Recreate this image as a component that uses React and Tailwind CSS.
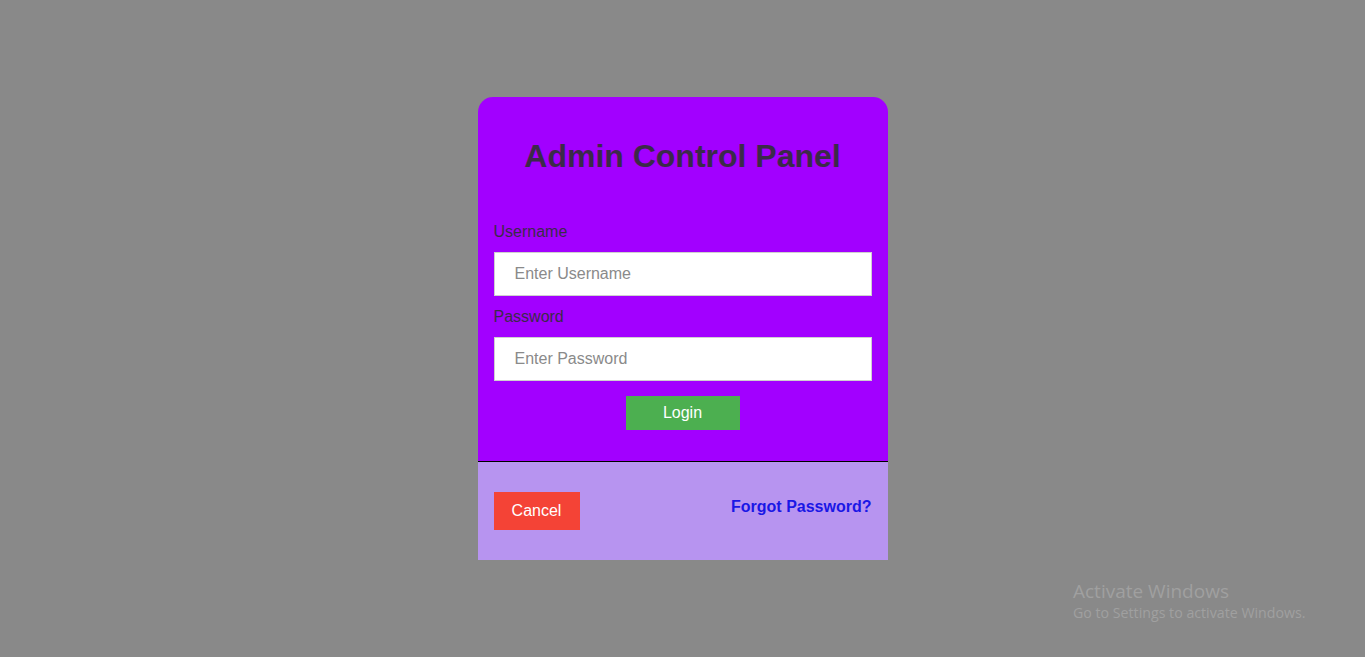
export default function App() {
  return (
    <div className="relative min-h-[657px] w-full bg-[#898989] font-['Liberation_Sans',Arial,sans-serif] overflow-hidden">
      <div className="mx-auto w-[410px] pt-[97px]">
        <div className="rounded-t-[15px] bg-[#a200ff] px-4 pt-[41px] pb-[31px]">
          <h1 className="text-center text-[32px] leading-[37px] font-bold text-[#3b2a49]">Admin Control Panel</h1>
          <form className="mt-[48px] flex flex-col">
            <label className="text-[16px] leading-[18px] text-[#3b2a49]">Username</label>
            <input
              type="text"
              placeholder="Enter Username"
              className="mt-[11px] h-[44px] w-full border border-[#cfcfcf] bg-white px-5 text-[16px] text-[#333] placeholder:text-[#8a8a8a] outline-none"
            />
            <label className="mt-[12px] text-[16px] leading-[18px] text-[#3b2a49]">Password</label>
            <input
              type="password"
              placeholder="Enter Password"
              className="mt-[11px] h-[44px] w-full border border-[#cfcfcf] bg-white px-5 text-[16px] text-[#333] placeholder:text-[#8a8a8a] outline-none"
            />
            <button type="button" className="mx-auto mt-[15px] h-[34px] w-[114px] bg-[#4caf50] text-[16px] text-white">
              Login
            </button>
          </form>
        </div>
        <div className="flex h-[99px] items-start justify-between border-t border-black bg-[#b794f0] px-4 pt-[30px]">
          <button type="button" className="h-[38px] w-[86px] bg-[#f44336] text-[16px] text-white">
            Cancel
          </button>
          <a href="#" className="mt-[6px] text-[16px] leading-[18px] font-bold text-[#1a17e6]">
            Forgot Password?
          </a>
        </div>
      </div>
      <div className="absolute left-[1073px] top-[580px] font-['Open_Sans','Noto_Sans',sans-serif] text-[#a0a0a0]">
        <div className="text-[19px] leading-[22px]">Activate Windows</div>
        <div className="mt-[1px] text-[14.2px] leading-[20px]">Go to Settings to activate Windows.</div>
      </div>
    </div>
  );
}
